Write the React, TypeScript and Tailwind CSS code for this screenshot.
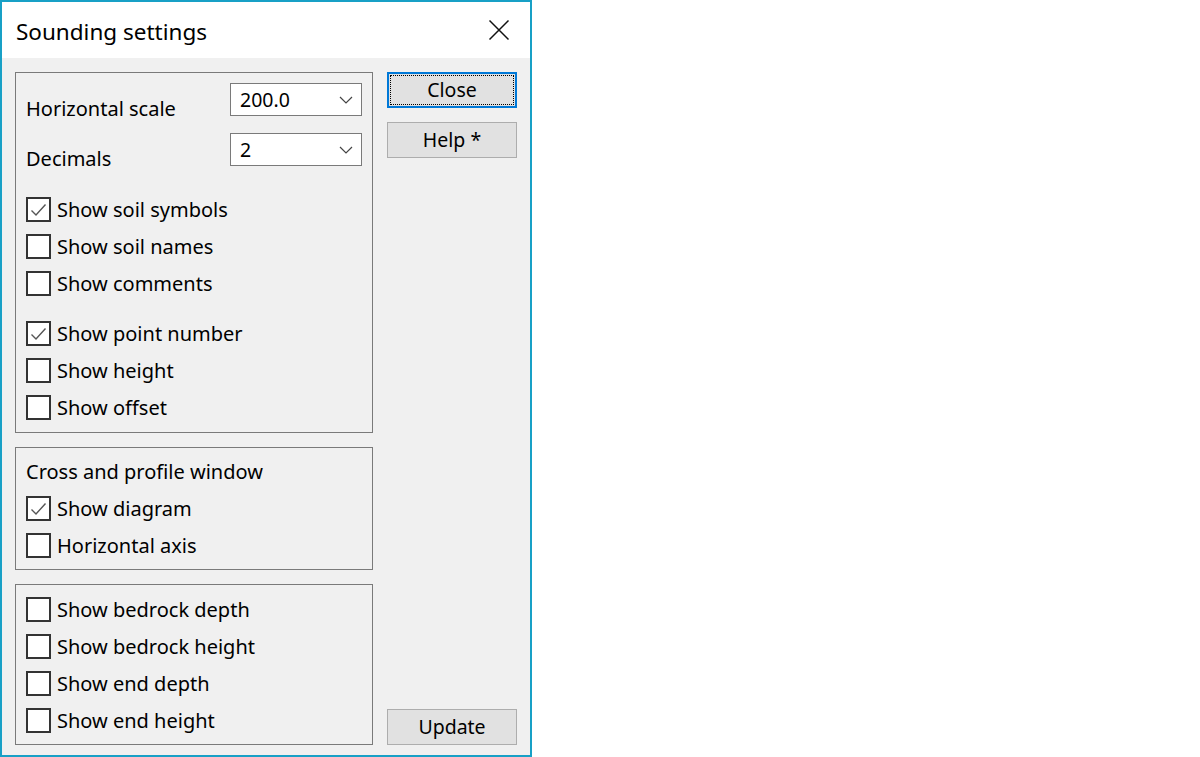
import { useState } from 'react';

const font = { fontFamily: '"Noto Sans", "Open Sans", sans-serif' };

function CheckRow({ label, checked, onToggle }: { label: string; checked: boolean; onToggle: () => void }) {
  return (
    <label className="flex h-[37px] cursor-default items-center gap-[6px]" onClick={onToggle}>
      <span className="flex h-[25px] w-[25px] items-center justify-center border-2 border-[#333333] bg-white">
        {checked && (
          <svg width="19" height="19" viewBox="0 0 19 19" fill="none">
            <path d="M2.5 10.5 L7 15 L16.5 4.5" stroke="#555555" strokeWidth="1.4" />
          </svg>
        )}
      </span>
      <span className="text-[20px] leading-none text-black">{label}</span>
    </label>
  );
}

function Combo({ value }: { value: string }) {
  return (
    <div className="flex h-[33px] w-[132px] items-center justify-between border border-[#7a7a7a] bg-white pl-[9px] pr-[8px]">
      <span className="text-[19.5px] leading-none text-black">{value}</span>
      <svg width="14" height="8" viewBox="0 0 14 8" fill="none">
        <path d="M1 1 L7 7 L13 1" stroke="#444444" strokeWidth="1.2" />
      </svg>
    </div>
  );
}

function Button({ label, focused }: { label: string; focused?: boolean }) {
  if (focused) {
    return (
      <button className="flex h-[36px] w-[130px] items-center justify-center border-2 border-[#0078d7] bg-[#e1e1e1] p-[1px]">
        <span className="flex h-full w-full items-center justify-center border border-dotted border-black text-[19.5px] leading-none text-black">
          {label}
        </span>
      </button>
    );
  }
  return (
    <button className="flex h-[36px] w-[130px] items-center justify-center border border-[#adadad] bg-[#e1e1e1] text-[19.5px] leading-none text-black">
      {label}
    </button>
  );
}

export default function App() {
  const [checks, setChecks] = useState<Record<string, boolean>>({
    'Show soil symbols': true,
    'Show soil names': false,
    'Show comments': false,
    'Show point number': true,
    'Show height': false,
    'Show offset': false,
    'Show diagram': true,
    'Horizontal axis': false,
    'Show bedrock depth': false,
    'Show bedrock height': false,
    'Show end depth': false,
    'Show end height': false,
  });

  const toggle = (k: string) => setChecks({ ...checks, [k]: !checks[k] });
  const row = (k: string) => <CheckRow key={k} label={k} checked={checks[k]} onToggle={() => toggle(k)} />;

  return (
    <div className="h-[757px] w-[1200px] bg-white" style={font}>
      <div className="flex h-[757px] w-[532px] flex-col border-2 border-[#18a0c6] bg-[#f0f0f0]">
        <div className="flex h-[56px] items-center justify-between bg-white pl-[14px] pr-[20px]">
          <span className="pt-[4px] text-[22.5px] text-black">Sounding settings</span>
          <svg width="22" height="22" viewBox="0 0 22 22" fill="none">
            <path d="M1.5 1.5 L20.5 20.5 M20.5 1.5 L1.5 20.5" stroke="#111111" strokeWidth="1.5" />
          </svg>
        </div>

        <div className="flex flex-1 gap-[14px] pl-[13px] pr-[12px] pt-[14px]">
          <div className="flex w-[358px] flex-col gap-[14px]">
            <div className="flex h-[361px] flex-col border border-[#7a7a7a] pl-[10px] pr-[10px] pt-[10px]">
              <div className="flex h-[33px] items-start justify-between">
                <span className="pt-[16px] text-[20px] leading-none text-black">Horizontal scale</span>
                <Combo value="200.0" />
              </div>
              <div className="mt-[17px] flex h-[33px] items-start justify-between">
                <span className="pt-[16px] text-[20px] leading-none text-black">Decimals</span>
                <Combo value="2" />
              </div>
              <div className="mt-[25px] flex flex-col">
                {['Show soil symbols', 'Show soil names', 'Show comments'].map(row)}
              </div>
              <div className="mt-[13px] flex flex-col">
                {['Show point number', 'Show height', 'Show offset'].map(row)}
              </div>
            </div>

            <div className="flex h-[123px] flex-col border border-[#7a7a7a] pl-[10px] pt-[5px]">
              <div className="flex h-[37px] items-center text-[20px] text-black">Cross and profile window</div>
              {['Show diagram', 'Horizontal axis'].map(row)}
            </div>

            <div className="flex h-[161px] flex-col border border-[#7a7a7a] pl-[10px] pt-[6px]">
              {['Show bedrock depth', 'Show bedrock height', 'Show end depth', 'Show end height'].map(row)}
            </div>
          </div>

          <div className="flex h-[673px] flex-col justify-between">
            <div className="flex flex-col gap-[14px]">
              <Button label="Close" focused />
              <Button label="Help *" />
            </div>
            <Button label="Update" />
          </div>
        </div>
      </div>
    </div>
  );
}
